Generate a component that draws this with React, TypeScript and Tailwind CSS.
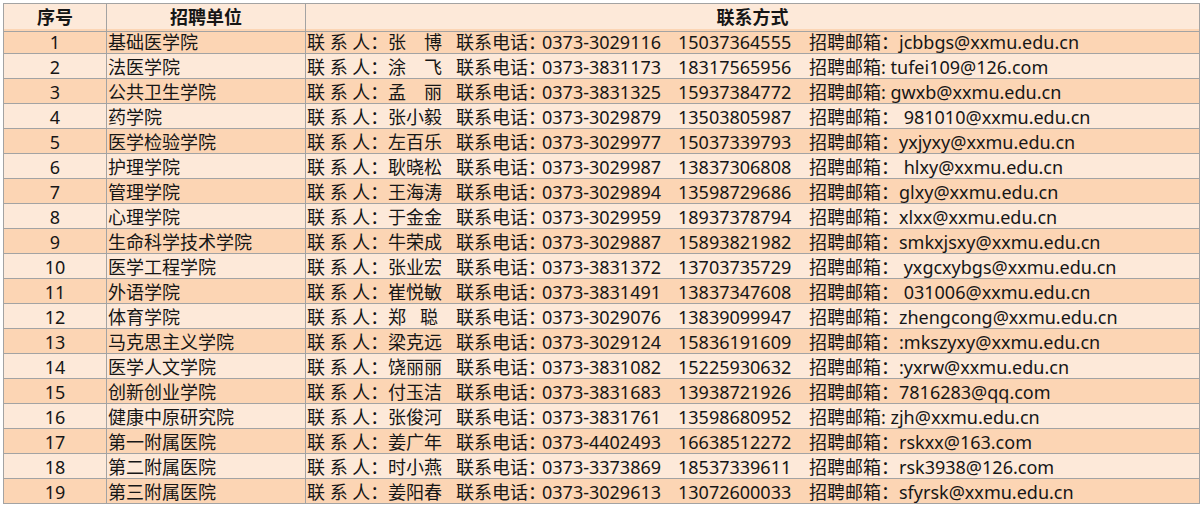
const rows = [
  ['基础医学院', '张\u3000博', '0373-3029116', '15037364555', 'cn', 'jcbbgs@xxmu.edu.cn'],
  ['法医学院', '涂\u3000飞', '0373-3831173', '18317565956', 'en', 'tufei109@126.com'],
  ['公共卫生学院', '孟\u3000丽', '0373-3831325', '15937384772', 'en', 'gwxb@xxmu.edu.cn'],
  ['药学院', '张小毅', '0373-3029879', '13503805987', 'cn', ' 981010@xxmu.edu.cn'],
  ['医学检验学院', '左百乐', '0373-3029977', '15037339793', 'cn', 'yxjyxy@xxmu.edu.cn'],
  ['护理学院', '耿晓松', '0373-3029987', '13837306808', 'cn', ' hlxy@xxmu.edu.cn'],
  ['管理学院', '王海涛', '0373-3029894', '13598729686', 'cn', 'glxy@xxmu.edu.cn'],
  ['心理学院', '于金金', '0373-3029959', '18937378794', 'cn', 'xlxx@xxmu.edu.cn'],
  ['生命科学技术学院', '牛荣成', '0373-3029887', '15893821982', 'cn', 'smkxjsxy@xxmu.edu.cn'],
  ['医学工程学院', '张业宏', '0373-3831372', '13703735729', 'cn', ' yxgcxybgs@xxmu.edu.cn'],
  ['外语学院', '崔悦敏', '0373-3831491', '13837347608', 'cn', ' 031006@xxmu.edu.cn'],
  ['体育学院', '郑   聪', '0373-3029076', '13839099947', 'cn', 'zhengcong@xxmu.edu.cn'],
  ['马克思主义学院', '梁克远', '0373-3029124', '15836191609', 'cn', ':mkszyxy@xxmu.edu.cn'],
  ['医学人文学院', '饶丽丽', '0373-3831082', '15225930632', 'cn', ':yxrw@xxmu.edu.cn'],
  ['创新创业学院', '付玉洁', '0373-3831683', '13938721926', 'cn', '7816283@qq.com'],
  ['健康中原研究院', '张俊河', '0373-3831761', '13598680952', 'en', 'zjh@xxmu.edu.cn'],
  ['第一附属医院', '姜广年', '0373-4402493', '16638512272', 'cn', 'rskxx@163.com'],
  ['第二附属医院', '时小燕', '0373-3373869', '18537339611', 'cn', 'rsk3938@126.com'],
  ['第三附属医院', '姜阳春', '0373-3029613', '13072600033', 'cn', 'sfyrsk@xxmu.edu.cn'],
]

export default function App() {
  return (
    <div className="h-[508px] w-[1204px] overflow-hidden bg-white pl-[3px] pt-[3px] font-['Noto_Sans','Noto_Sans_CJK_SC',sans-serif] text-[18px] text-[#161616]">
      <div className="w-[1197px] border-l border-t border-[#a3a3a3]">
        <div className="grid h-[25px] grid-cols-[103px_199px_894px] bg-[#fde9d9] font-bold">
          <div className="flex items-center justify-center border-b border-r border-[#a3a3a3]">序号</div>
          <div className="flex items-center justify-center border-b border-r border-[#a3a3a3]">招聘单位</div>
          <div className="flex items-center justify-center border-b border-r border-[#a3a3a3]">联系方式</div>
        </div>
        {rows.map(([unit, name, tel, mobile, colon, email], i) => (
          <div
            key={unit}
            className={`grid h-[25px] grid-cols-[103px_199px_894px] leading-none ${i % 2 === 0 ? 'bg-[#fcd5b4]' : 'bg-[#fde9d9]'}`}
          >
            <div className="flex items-center justify-center border-b border-r border-[#a3a3a3] pt-[1px]">{i + 1}</div>
            <div className="flex items-center border-b border-r border-[#a3a3a3] pl-[1px] pt-[1px]">{unit}</div>
            <div className="flex items-center whitespace-pre border-b border-r border-[#a3a3a3] pl-[1px] pt-[1px]">
              <span className="w-[81px]">联 系 人：</span>
              <span className="w-[68px]">{name}</span>
              <span className="w-[86px]">联系电话：</span>
              <span className="w-[136px]">{tel}</span>
              <span className="w-[131px]">{mobile}</span>
              <span>{colon === 'cn' ? '招聘邮箱：' : '招聘邮箱: '}</span>
              <span>{email}</span>
            </div>
          </div>
        ))}
      </div>
    </div>
  )
}
